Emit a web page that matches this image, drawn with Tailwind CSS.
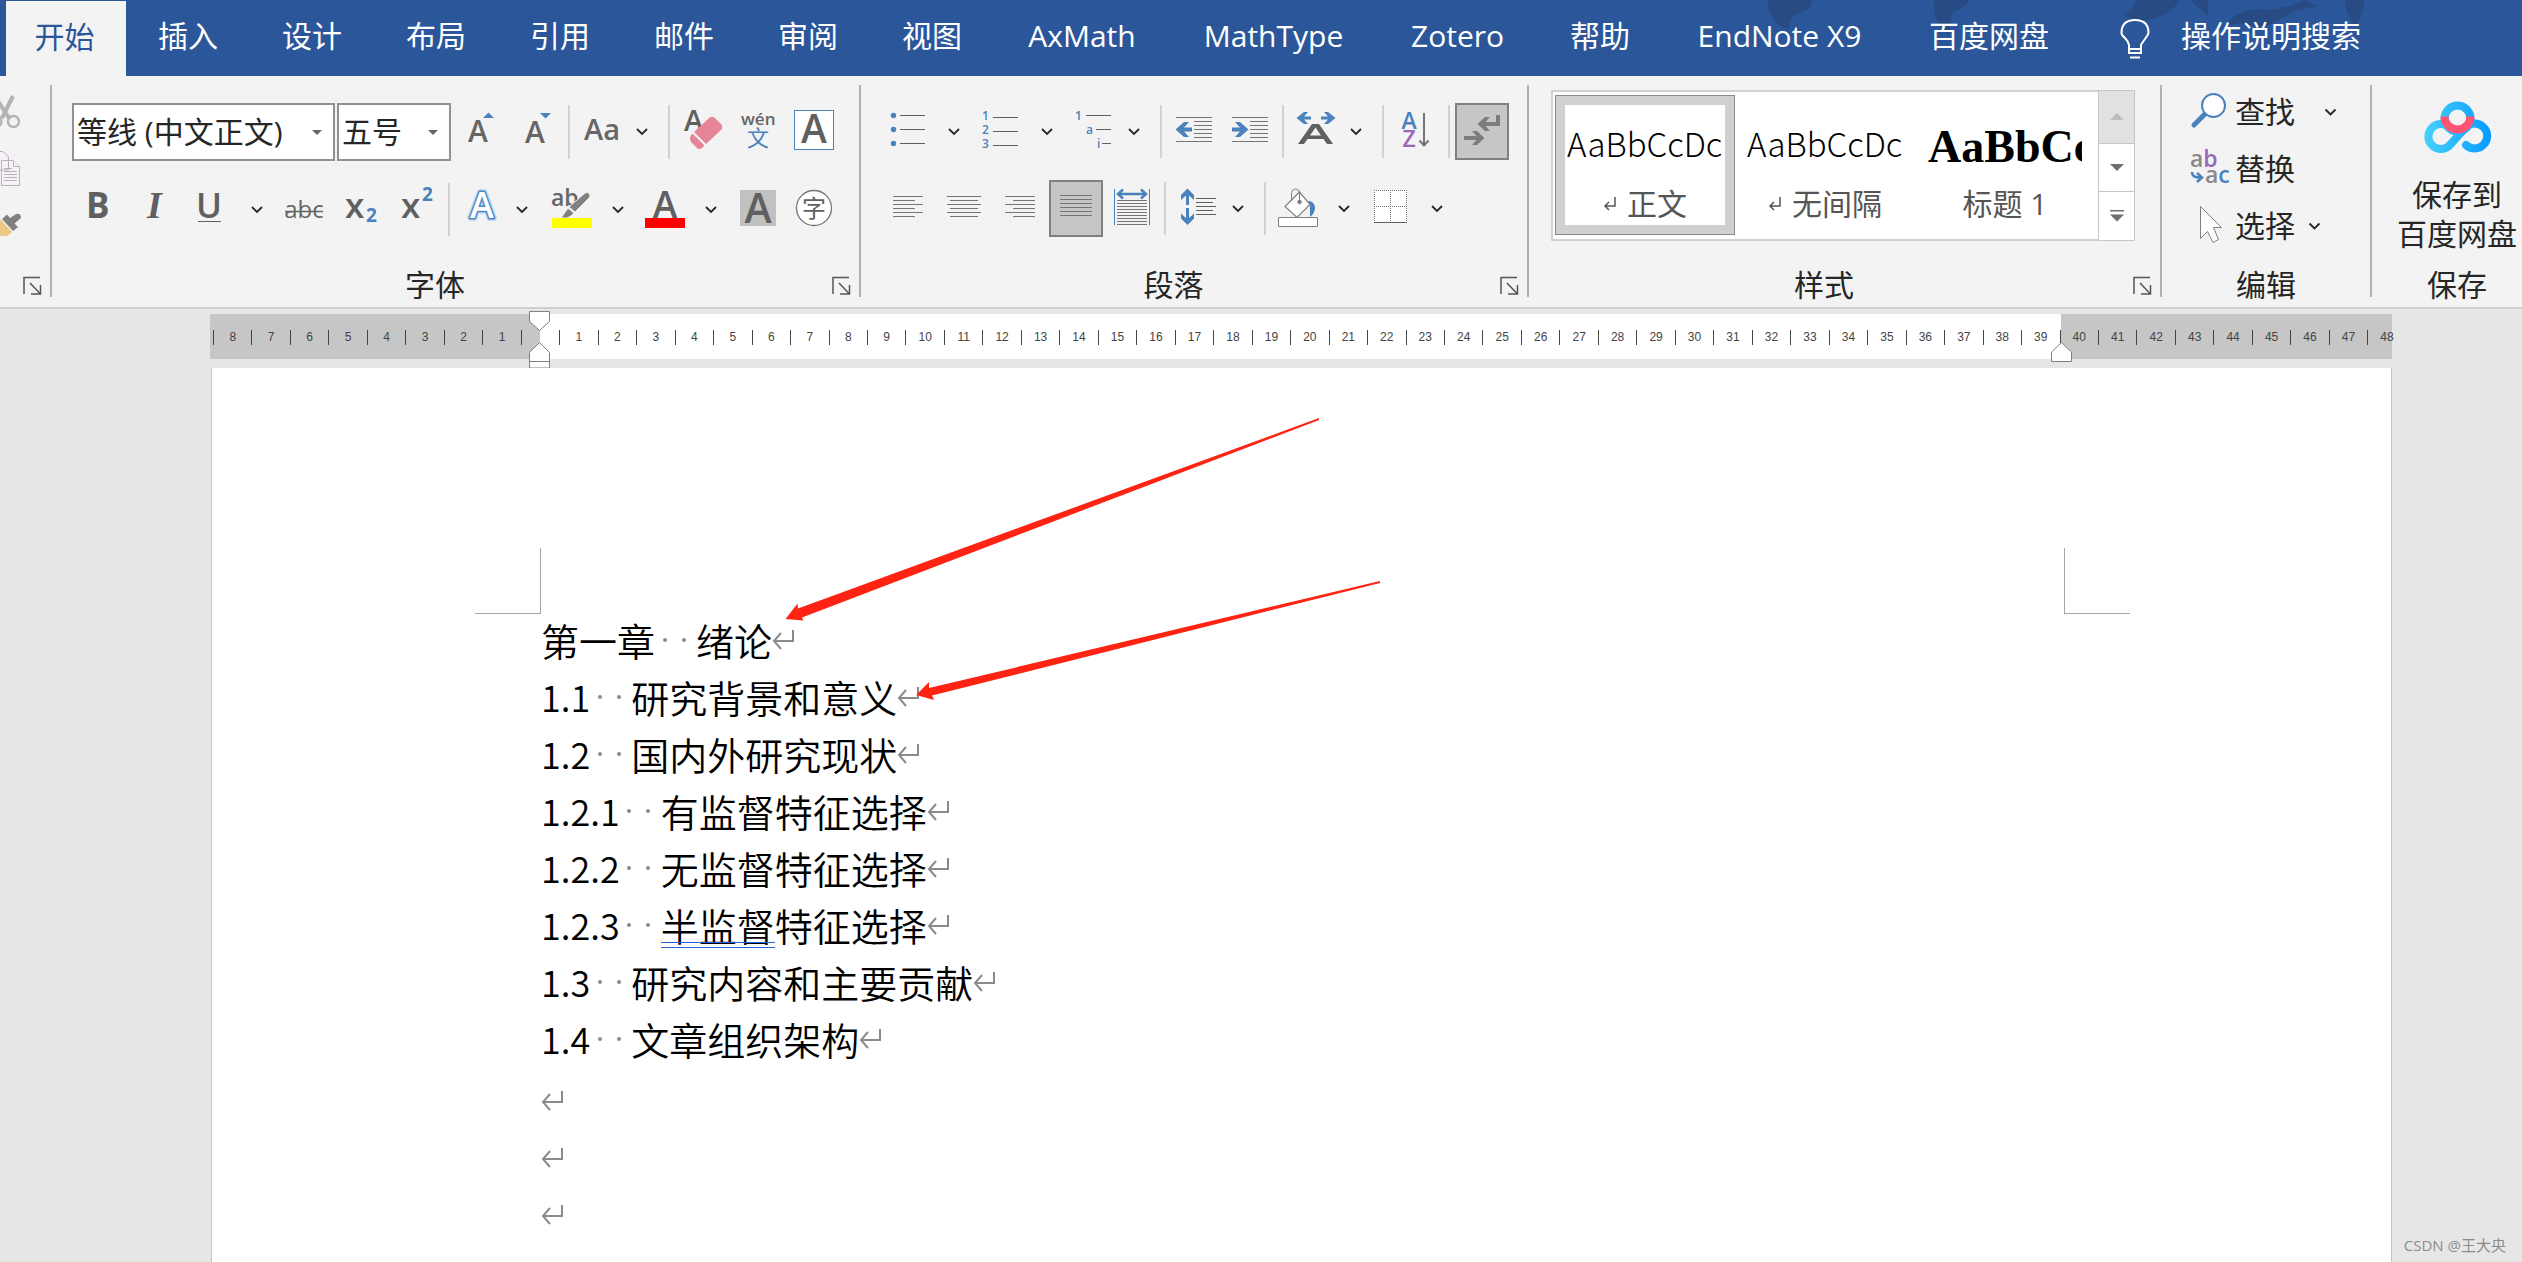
<!DOCTYPE html>
<html lang="zh-CN">
<head>
<meta charset="utf-8">
<title>Word</title>
<script src="https://cdn.jsdelivr.net/npm/@tailwindcss/browser@4"></script>
</head>
<body class="flex min-h-screen flex-col overflow-x-hidden bg-[#e6e6e6] font-['Open_Sans','Noto_Sans_CJK_SC',sans-serif] text-[#262626]">

<!-- Ribbon tabs -->
<nav class="relative flex h-[76px] shrink-0 items-stretch overflow-hidden bg-[#2b579a] pl-[6px] text-[30px] leading-[72px] text-white whitespace-nowrap">
  <svg class="absolute top-0 right-0" width="822" height="56" viewBox="1700 0 822 56" fill="#274b82">
    <path d="M1768 0H1812Q1812 10 1801 12Q1790 15 1788 30Q1768 22 1768 0ZM1934 0H1970Q1964 8 1953 12L1948 34Q1932 22 1934 0ZM2136 0H2180Q2168 18 2146 20Q2132 20 2122 14Q2134 12 2136 0ZM2190 0H2208V16ZM2224 26Q2240 6 2270 10L2290 6L2304 0L2318 6L2292 12Q2278 22 2262 28Q2240 20 2224 26ZM2345 0H2364Q2364 14 2355 26Q2346 14 2345 0Z"/>
  </svg>
  <a href="#" class="relative mt-px w-[120px] bg-[#f3f3f3] pr-[3px] text-center text-[#2b579a]">开始</a>
  <a href="#" class="relative w-[124px] text-center">插入</a>
  <a href="#" class="relative w-[124px] text-center">设计</a>
  <a href="#" class="relative w-[124px] text-center">布局</a>
  <a href="#" class="relative w-[124px] text-center">引用</a>
  <a href="#" class="relative w-[124px] text-center">邮件</a>
  <a href="#" class="relative w-[124px] text-center">审阅</a>
  <a href="#" class="relative w-[124px] text-center">视图</a>
  <a href="#" class="relative w-[176px] text-center">AxMath</a>
  <a href="#" class="relative w-[207px] text-center">MathType</a>
  <a href="#" class="relative w-[161px] text-center">Zotero</a>
  <a href="#" class="relative w-[124px] text-center">帮助</a>
  <a href="#" class="relative w-[235px] text-center">EndNote X9</a>
  <a href="#" class="relative w-[184px] text-center">百度网盘</a>
  <a href="#" class="relative ml-[32px] flex gap-[20px]">
    <svg width="48" height="76" viewBox="2114 0 48 76" fill="none" stroke="#fff" stroke-width="2"><path d="M2130 49V45Q2129 41 2126 38Q2122.500 35 2122.500 33Q2122.500 20 2136 20Q2149.500 20 2149.500 33Q2149 35 2146 39Q2143 43 2142 45V53H2130V49H2142M2131 57.500H2141"/></svg>
    <span>操作说明搜索</span>
  </a>
</nav>

<!-- Ribbon -->
<header class="flex h-[233px] shrink-0 overflow-hidden border-b-2 border-[#cfcfcf] bg-[#f3f3f3] text-[30px] leading-[40px] whitespace-nowrap">

  <!-- Clipboard -->
  <section class="flex w-[50px] shrink-0 flex-col">
    <svg width="50" height="160" viewBox="0 76 50 160">
      <g fill="none" stroke="#b3b3b3" stroke-width="2.500"><path d="M-2 101L9 118" stroke-width="4"/><path d="M13 96L2 118" stroke-width="4"/><circle cx="13.500" cy="121.500" r="5.500"/><circle cx="-4" cy="121.500" r="5.500"/></g>
      <g fill="#f6f2f7" stroke="#b9aebd"><path d="M-6 151.500H3L8.500 157V170H-6ZM1.500 160.500H13L19.500 167V185.500H1.500Z"/><path d="M13.500 160.500V166.500H19M4 168.500H12M4 171.500H17M4 174.500H17M4 177.500H17M4 180.500H17"/></g>
      <path d="M0 219L12 232L2 241L-4 236Z" fill="#ecc77f"/><path d="M2 219L7 214.500L10 218L16 214Q21 213 21 218L14.500 223.500L18 227L13 231Z" fill="#7f7f7f"/>
    </svg>
    <div class="mt-auto mb-[2px] flex h-[40px] items-center justify-end pr-[6px]">
      <button aria-label="剪贴板设置"><svg width="24" height="24" fill="none" stroke="#555" stroke-width="1.500"><path d="M4 21V4.500H20M10 10L20 20.500M20.500 12V21H11"/></svg></button>
    </div>
  </section>
  <div class="mt-[9px] h-[212px] w-[2px] shrink-0 bg-[#b1b1b1]"></div>

  <!-- Font -->
  <section class="flex w-[807px] shrink-0 flex-col pt-[27px]">
    <div class="flex h-[58px] pl-[20px]">
      <div class="relative w-[263px]">
        <select aria-label="字体" class="h-[58px] w-full appearance-none border-2 border-[#919191] bg-white pl-[3px] text-[30px]"><option>等线 (中文正文)</option></select>
        <svg class="pointer-events-none absolute top-[26px] right-[12px]" width="12" height="7"><path d="M1 1H11L6 6Z" fill="#666"/></svg>
      </div>
      <div class="relative ml-[2px] w-[114px]">
        <select aria-label="字号" class="h-[58px] w-full appearance-none border-2 border-[#919191] bg-white pl-[3px] text-[30px]"><option>五号</option></select>
        <svg class="pointer-events-none absolute top-[26px] right-[12px]" width="12" height="7"><path d="M1 1H11L6 6Z" fill="#666"/></svg>
      </div>
      <button aria-label="增大字号"><svg width="56" height="58" viewBox="451 103 56 58"><text x="468" y="142" font-size="30" font-weight="600" fill="#666">A</text><path d="M483 118L488.500 112.500L494 118Z" fill="#4a82bd"/></svg></button>
      <button aria-label="减小字号"><svg width="61" height="58" viewBox="507 103 61 58"><text x="525" y="143" font-size="30" font-weight="600" fill="#666">A</text><path d="M540 113L545.500 118.500L551 113Z" fill="#4a82bd"/></svg></button>
      <div class="mt-[2px] h-[54px] w-[2px] bg-[#d2d2d2]"></div>
      <button aria-label="更改大小写"><svg width="58" height="58" viewBox="570 103 58 58"><text x="584" y="140" font-size="29" font-weight="600" fill="#666">Aa</text></svg></button>
      <button aria-label="更改大小写选项"><svg width="40" height="58" viewBox="628 103 40 58" fill="none" stroke="#262626" stroke-width="1.800"><path d="M637 129L642 134L647 129"/></svg></button>
      <div class="mt-[2px] h-[54px] w-[2px] bg-[#d2d2d2]"></div>
      <button aria-label="清除格式"><svg width="60" height="58" viewBox="670 103 60 58"><text x="684" y="131" font-size="29" font-weight="600" fill="#606060">A</text><g fill="#e68597"><path d="M709 118Q712 115.500 715 118L721 124Q723.500 127 721 130L706 144L694 132Z"/><path d="M692.500 133.500L704.500 145.500L702 148Q699.500 150 697 148L691 142Q689 139 690.500 136Z"/></g></svg></button>
      <button aria-label="拼音指南"><svg width="54" height="58" viewBox="730 103 54 58"><text x="741" y="125" font-size="17" font-weight="600" fill="#666">wén</text><text x="747" y="146" font-size="22" fill="#4a82bd">文</text></svg></button>
      <button aria-label="字符边框"><svg width="66" height="58" viewBox="784 103 66 58"><rect x="794.500" y="110.500" width="39" height="39" fill="#fff" stroke="#4a82bd"/><text x="814" y="143" text-anchor="middle" font-size="39" font-weight="600" fill="#606060">A</text></svg></button>
    </div>
    <div class="mt-[19px] flex h-[58px] pl-[20px]">
      <button aria-label="加粗"><svg width="54" height="58" viewBox="72 180 54 58"><text x="86" y="218" font-size="35" font-weight="700" fill="#606060">B</text></svg></button>
      <button aria-label="倾斜"><svg width="54" height="58" viewBox="126 180 54 58"><text x="147" y="218" font-family="Liberation Serif,serif" font-size="38" font-style="italic" font-weight="700" fill="#606060">I</text></svg></button>
      <button aria-label="下划线"><svg width="56" height="58" viewBox="180 180 56 58"><text x="209" y="218" text-anchor="middle" font-size="35" font-weight="600" fill="#606060">U</text><path d="M198 221.500H221" stroke="#606060"/></svg></button>
      <button aria-label="下划线样式"><svg width="42" height="58" viewBox="236 180 42 58" fill="none" stroke="#262626" stroke-width="1.800"><path d="M252 207L257 212L262 207"/></svg></button>
      <button aria-label="删除线"><svg width="56" height="58" viewBox="278 180 56 58"><text x="304" y="218" text-anchor="middle" font-size="24" fill="#666">abc</text><path d="M285 211.500H323" stroke="#666" stroke-width="1.500"/></svg></button>
      <button aria-label="下标"><svg width="56" height="58" viewBox="334 180 56 58"><text x="345" y="218" font-size="35" font-weight="600" fill="#606060">x</text><text x="366" y="222" font-size="19" font-weight="700" fill="#4a82bd">2</text></svg></button>
      <button aria-label="上标"><svg width="58" height="58" viewBox="390 180 58 58"><text x="401" y="218" font-size="35" font-weight="600" fill="#606060">x</text><text x="422" y="201" font-size="19" font-weight="700" fill="#4a82bd">2</text></svg></button>
      <div class="mt-[3px] h-[53px] w-[2px] bg-[#d2d2d2]"></div>
      <button aria-label="文本效果"><svg width="56" height="58" viewBox="450 180 56 58"><g text-anchor="middle" font-size="36" font-weight="600" stroke-linejoin="round"><text x="482" y="218" fill="#c5dcf3" stroke="#c5dcf3" stroke-width="6">A</text><text x="482" y="218" fill="#4a86c8" stroke="#4a86c8" stroke-width="3">A</text><text x="482" y="218" fill="#fff">A</text></g></svg></button>
      <button aria-label="文本效果选项"><svg width="34" height="58" viewBox="506 180 34 58" fill="none" stroke="#262626" stroke-width="1.800"><path d="M517 207L522 212L527 207"/></svg></button>
      <button aria-label="突出显示"><svg width="62" height="58" viewBox="540 180 62 58"><text x="551" y="206" font-size="23" font-weight="600" fill="#666">ab</text><path d="M585 193Q590 191 590 197L575 212L569 207ZM568 208L574 213L571 216L567 218H561Z" fill="#808080" stroke="#f3f3f3"/><path d="M552 218H592V228H552Z" fill="#ff0"/></svg></button>
      <button aria-label="突出显示颜色"><svg width="32" height="58" viewBox="602 180 32 58" fill="none" stroke="#262626" stroke-width="1.800"><path d="M613 207L618 212L623 207"/></svg></button>
      <button aria-label="字体颜色"><svg width="61" height="58" viewBox="634 180 61 58"><text x="665" y="218" text-anchor="middle" font-size="37" font-weight="600" fill="#606060">A</text><path d="M645 218H685V228H645Z" fill="#f00"/></svg></button>
      <button aria-label="字体颜色选项"><svg width="35" height="58" viewBox="695 180 35 58" fill="none" stroke="#262626" stroke-width="1.800"><path d="M706 207L711 212L716 207"/></svg></button>
      <button aria-label="字符底纹"><svg width="56" height="58" viewBox="730 180 56 58"><path d="M740 190H776V226H740Z" fill="#c1c1c1"/><text x="758" y="223" text-anchor="middle" font-size="41" font-weight="600" fill="#606060">A</text></svg></button>
      <button aria-label="带圈字符"><svg width="60" height="58" viewBox="786 180 60 58"><circle cx="814" cy="208" r="17.500" fill="#fff" stroke="#757575" stroke-width="1.300"/><text x="814" y="217" text-anchor="middle" font-size="24" fill="#606060">字</text></svg></button>
    </div>
    <div class="mt-auto mb-[2px] flex h-[40px] items-center pr-[6px]">
      <span class="flex-1 pr-[11px] text-center">字体</span>
      <button aria-label="字体设置"><svg width="24" height="24" fill="none" stroke="#555" stroke-width="1.500"><path d="M4 21V4.500H20M10 10L20 20.500M20.500 12V21H11"/></svg></button>
    </div>
  </section>
  <div class="mt-[9px] h-[212px] w-[2px] shrink-0 bg-[#b1b1b1]"></div>

  <!-- Paragraph -->
  <section class="flex w-[666px] shrink-0 flex-col pt-[27px]">
    <div class="flex h-[58px] pl-[20px]">
      <button aria-label="项目符号"><svg width="56" height="58" viewBox="881 103 56 58"><g fill="#4a82bd"><circle cx="893.500" cy="115.500" r="2.700"/><circle cx="893.500" cy="129.500" r="2.700"/><circle cx="893.500" cy="143.500" r="2.700"/></g><path d="M900 115.500H925M900 129.500H925M900 143.500H925" stroke="#606060"/></svg></button>
      <button aria-label="项目符号选项"><svg width="35" height="58" viewBox="937 103 35 58" fill="none" stroke="#262626" stroke-width="1.800"><path d="M949 129L954 134L959 129"/></svg></button>
      <button aria-label="编号"><svg width="58" height="58" viewBox="972 103 58 58"><g font-size="12" font-weight="600" fill="#4a82bd"><text x="982" y="120">1</text><text x="982" y="134">2</text><text x="982" y="148">3</text></g><path d="M993 117.500H1018M993 131.500H1018M993 145.500H1018" stroke="#606060"/></svg></button>
      <button aria-label="编号选项"><svg width="35" height="58" viewBox="1030 103 35 58" fill="none" stroke="#262626" stroke-width="1.800"><path d="M1042 129L1047 134L1052 129"/></svg></button>
      <button aria-label="多级列表"><svg width="53" height="58" viewBox="1065 103 53 58"><g font-size="12" font-weight="600" fill="#4a82bd"><text x="1075" y="120">1</text><text x="1086" y="134">a</text><text x="1097" y="148">i</text></g><path d="M1086 115.500H1111M1096 129.500H1111M1102 143.500H1111" stroke="#606060"/></svg></button>
      <button aria-label="多级列表选项"><svg width="42" height="58" viewBox="1118 103 42 58" fill="none" stroke="#262626" stroke-width="1.800"><path d="M1129 129L1134 134L1139 129"/></svg></button>
      <div class="mt-[2px] h-[53px] w-[2px] bg-[#d2d2d2]"></div>
      <button aria-label="减少缩进"><svg width="60" height="58" viewBox="1162 103 60 58"><path d="M1176 117.500H1212M1194 121.500H1212M1194 125.500H1212M1194 129.500H1212M1194 133.500H1212M1194 137.500H1212M1176 141.500H1212" stroke="#757575"/><path d="M1175.500 129.500L1184 122H1189L1184 127.500H1192V131.500H1184L1189 137H1184Z" fill="#4a82bd"/></svg></button>
      <button aria-label="增加缩进"><svg width="60" height="58" viewBox="1222 103 60 58"><path d="M1232 117.500H1268M1250 121.500H1268M1250 125.500H1268M1250 129.500H1268M1250 133.500H1268M1250 137.500H1268M1232 141.500H1268" stroke="#757575"/><path d="M1248.500 129.500L1240 122H1235L1240 127.500H1232V131.500H1240L1235 137H1240Z" fill="#4a82bd"/></svg></button>
      <div class="mt-[2px] h-[53px] w-[2px] bg-[#d2d2d2]"></div>
      <button aria-label="中文版式"><svg width="58" height="58" viewBox="1284 103 58 58"><path d="M1296.500 118L1304 112H1308L1304 116.500H1311V119.500H1304L1308 124H1304ZM1335.500 118L1328 112H1324L1328 116.500H1321V119.500H1328L1324 124H1328Z" fill="#4a82bd"/><path d="M1298 144L1312 124H1319L1333 144H1327L1323.500 139H1307.500L1304 144ZM1310 135.500H1321L1315.500 127.500Z" fill="#606060" fill-rule="evenodd"/></svg></button>
      <button aria-label="中文版式选项"><svg width="40" height="58" viewBox="1342 103 40 58" fill="none" stroke="#262626" stroke-width="1.800"><path d="M1351 129L1356 134L1361 129"/></svg></button>
      <div class="mt-[2px] h-[53px] w-[2px] bg-[#d2d2d2]"></div>
      <button aria-label="排序"><svg width="64" height="58" viewBox="1384 103 64 58"><text x="1409" y="129" text-anchor="middle" font-size="23" font-weight="600" fill="#4a82bd">A</text><text x="1409" y="147" text-anchor="middle" font-size="23" font-weight="600" fill="#9b67b8">Z</text><path d="M1424 113V145M1419.500 140.500L1424 145.500L1428.500 140.500" fill="none" stroke="#757575" stroke-width="2"/></svg></button>
      <div class="mt-[2px] h-[53px] w-[2px] bg-[#d2d2d2]"></div>
      <button aria-label="显示编辑标记" class="ml-[5px] h-[57px] w-[54px] border-2 border-[#808080] bg-[#c6c6c6]"><svg width="50" height="53" viewBox="1457 105 50 53" fill="#7c7c7c"><path d="M1477.500 124L1485 117H1490L1485.500 122H1496V115H1500V126H1485.500L1490 131H1485ZM1484.500 138L1477 131H1472L1476.500 136H1464V140H1476.500L1472 145H1477Z"/></svg></button>
    </div>
    <div class="mt-[19px] flex h-[58px] pl-[20px]">
      <button aria-label="左对齐"><svg width="54" height="58" viewBox="881 180 54 58"><path d="M893 196.500H923M893 200.500H915M893 204.500H923M893 208.500H915M893 212.500H923M893 216.500H915" stroke="#757575"/></svg></button>
      <button aria-label="居中"><svg width="58" height="58" viewBox="935 180 58 58"><path d="M947 196.500H981M950 200.500H978M947 204.500H981M950 208.500H978M947 212.500H981M950 216.500H978" stroke="#757575"/></svg></button>
      <button aria-label="右对齐"><svg width="56" height="58" viewBox="993 180 56 58"><path d="M1005 196.500H1035M1013 200.500H1035M1005 204.500H1035M1013 208.500H1035M1005 212.500H1035M1013 216.500H1035" stroke="#757575"/></svg></button>
      <button aria-label="两端对齐" class="h-[57px] w-[54px] border-2 border-[#808080] bg-[#c6c6c6]"><svg width="50" height="53" viewBox="1051 182 50 53"><path d="M1060 195.500H1092M1060 199.500H1092M1060 203.500H1092M1060 207.500H1092M1060 211.500H1092M1060 215.500H1092" stroke="#757575"/></svg></button>
      <button aria-label="分散对齐"><svg width="61" height="58" viewBox="1103 180 61 58"><path d="M1114.500 189V225M1149.500 189V225" stroke="#4a82bd"/><path d="M1117 194H1147M1123 189.500L1118 194L1123 198.500M1141 189.500L1146 194L1141 198.500" fill="none" stroke="#4a82bd" stroke-width="2.500"/><path d="M1117 200.500H1147M1117 203.500H1147M1117 206.500H1147M1117 209.500H1147M1117 212.500H1147M1117 215.500H1147M1117 218.500H1147M1117 221.500H1147M1117 224.500H1147" stroke="#757575"/></svg></button>
      <div class="mt-[2px] h-[53px] w-[2px] bg-[#d2d2d2]"></div>
      <button aria-label="行距"><svg width="60" height="58" viewBox="1166 180 60 58"><path d="M1187.500 188.500L1194 195V200L1189 195.500V205H1186V195.500L1181 200V195ZM1187.500 225L1194 218.500V213.500L1189 218V208H1186V218L1181 213.500V218.500Z" fill="#4a82bd"/><path d="M1196 198.500H1216M1196 202.500H1213M1196 206.500H1216M1196 210.500H1213M1196 214.500H1216" stroke="#606060"/></svg></button>
      <button aria-label="行距选项"><svg width="38" height="58" viewBox="1226 180 38 58" fill="none" stroke="#262626" stroke-width="1.800"><path d="M1233 206L1238 211L1243 206"/></svg></button>
      <div class="mt-[2px] h-[53px] w-[2px] bg-[#d2d2d2]"></div>
      <button aria-label="底纹"><svg width="64" height="58" viewBox="1266 180 64 58"><path d="M1308 201Q1315 201 1315 209Q1314 214 1310 217V207Z" fill="#4a82bd"/><g fill="#fff" stroke="#808080"><path d="M1299.500 192L1310 204.500L1297 217.500L1285 206.500Z" stroke-width="1.200"/><path d="M1291.500 201V193Q1292 189 1295.500 189Q1299.500 189 1299.500 193V201" fill="none"/><circle cx="1299.500" cy="202" r="1.800" fill="#808080"/><path d="M1278.500 217.500H1317.500V226.500H1278.500Z"/></g></svg></button>
      <button aria-label="底纹选项"><svg width="32" height="58" viewBox="1330 180 32 58" fill="none" stroke="#262626" stroke-width="1.800"><path d="M1339 206L1344 211L1349 206"/></svg></button>
      <button aria-label="边框"><svg width="58" height="58" viewBox="1362 180 58 58"><path d="M1374 190H1407V223H1374Z" fill="#fff"/><path d="M1374 190.500H1407M1374 206.500H1407M1374.500 190V222M1390.500 190V222M1406.500 190V222" stroke="#757575" stroke-dasharray="1 1"/><path d="M1374 222.500H1407" stroke="#606060"/></svg></button>
      <button aria-label="边框选项"><svg width="36" height="58" viewBox="1420 180 36 58" fill="none" stroke="#262626" stroke-width="1.800"><path d="M1432 206L1437 211L1442 206"/></svg></button>
    </div>
    <div class="mt-auto mb-[2px] flex h-[40px] items-center pr-[6px]">
      <span class="flex-1 pr-[11px] text-center">段落</span>
      <button aria-label="段落设置"><svg width="24" height="24" fill="none" stroke="#555" stroke-width="1.500"><path d="M4 21V4.500H20M10 10L20 20.500M20.500 12V21H11"/></svg></button>
    </div>
  </section>
  <div class="mt-[9px] h-[212px] w-[2px] shrink-0 bg-[#b1b1b1]"></div>

  <!-- Styles -->
  <section class="flex w-[631px] shrink-0 flex-col pt-[14px]">
    <div class="ml-[22px] flex h-[151px] w-[584px]">
      <div class="flex flex-1 border-2 border-r-0 border-[#d2d2d2] bg-white p-[3px] pl-[2px]">
        <button class="flex h-[140px] w-[180px] flex-col items-center overflow-hidden border border-[#8a8a8a] bg-[#d1d0ce] p-[9px]">
          <span class="flex h-[120px] w-full flex-col items-center bg-white pt-[18px]">
            <span class="w-[156px] overflow-hidden text-left font-['Noto_Sans_CJK_SC',sans-serif] text-[33px] font-light text-black">AaBbCcDc</span>
            <span class="mt-[21px] flex items-center gap-[11px] text-[#555]"><svg width="13" height="16" fill="none" stroke="#555" stroke-width="1.500"><path d="M12 1V10H2M6 6L2 10L6 14"/></svg>正文</span>
          </span>
        </button>
        <button class="flex h-[140px] w-[180px] flex-col items-center overflow-hidden pt-[28px]">
          <span class="w-[156px] overflow-hidden text-left font-['Noto_Sans_CJK_SC',sans-serif] text-[33px] font-light text-black">AaBbCcDc</span>
          <span class="mt-[21px] flex items-center gap-[11px] text-[#555]"><svg width="13" height="16" fill="none" stroke="#555" stroke-width="1.500"><path d="M12 1V10H2M6 6L2 10L6 14"/></svg>无间隔</span>
        </button>
        <button class="flex h-[140px] w-[180px] flex-col items-center overflow-hidden pt-[28px]">
          <span class="w-[154px] overflow-hidden text-left font-['Liberation_Serif',serif] text-[46px] leading-[48px] font-bold text-black">AaBbCc</span>
          <span class="mt-[13px] text-[#555]">标题 1</span>
        </button>
      </div>
      <div class="flex w-[38px] flex-col">
        <button aria-label="上一行" class="flex h-[54px] items-center justify-center border border-[#c6c6c6] bg-[#e1e1e1]"><svg width="14" height="8"><path d="M0 7H14L7 0Z" fill="#bdbdbd"/></svg></button>
        <button aria-label="下一行" class="flex h-[48px] items-center justify-center border border-t-0 border-[#c6c6c6] bg-white"><svg width="14" height="8"><path d="M0 0H14L7 7Z" fill="#707070"/></svg></button>
        <button aria-label="其他样式" class="flex h-[49px] items-center justify-center border border-t-0 border-[#c6c6c6] bg-white"><svg width="14" height="12"><path d="M0 0H14V1.500H0ZM0 4.500H14L7 11.500Z" fill="#707070"/></svg></button>
      </div>
    </div>
    <div class="mt-auto mb-[2px] flex h-[40px] items-center pr-[6px]">
      <span class="flex-1 pr-[11px] text-center">样式</span>
      <button aria-label="样式设置"><svg width="24" height="24" fill="none" stroke="#555" stroke-width="1.500"><path d="M4 21V4.500H20M10 10L20 20.500M20.500 12V21H11"/></svg></button>
    </div>
  </section>
  <div class="mt-[9px] h-[212px] w-[2px] shrink-0 bg-[#b1b1b1]"></div>

  <!-- Editing -->
  <section class="flex w-[208px] shrink-0 flex-col pt-[8px]">
    <button class="flex h-[56px] items-center"><svg width="73" height="56" viewBox="2162 84 73 56"><path d="M2206 113L2194 125" stroke="#4a82bd" stroke-width="5" stroke-linecap="round"/><circle cx="2213.500" cy="105.500" r="11.500" fill="#fff" stroke="#4a82bd" stroke-width="2"/></svg>查找<svg class="ml-[29px]" width="14" height="8" fill="none" stroke="#262626" stroke-width="1.800"><path d="M1.500 1.500L6.500 6.500L11.500 1.500"/></svg></button>
    <button class="flex h-[57px] items-center"><svg width="73" height="57" viewBox="2162 140 73 57"><g font-size="23" font-weight="600"><text x="2190" y="167" fill="#8a8a8a">a<tspan fill="#9b67b8">b</tspan></text><text x="2205" y="183" fill="#8a8a8a">a<tspan fill="#4a82bd">c</tspan></text></g><path d="M2192 172Q2192 178 2201 177.500M2197 173L2202 177.500L2197 182" fill="none" stroke="#4a82bd" stroke-width="2.500"/></svg>替换</button>
    <button class="flex h-[57px] items-center"><svg width="73" height="57" viewBox="2162 197 73 57"><path d="M2200.500 206.500V238.500L2207.500 231.500L2213 242.500L2218.500 239.500L2213.500 227.500H2221.500Z" fill="#fff" stroke="#808080"/></svg>选择<svg class="ml-[13px]" width="14" height="8" fill="none" stroke="#262626" stroke-width="1.800"><path d="M1.500 1.500L6.500 6.500L11.500 1.500"/></svg></button>
    <div class="mt-auto mb-[2px] h-[40px] text-center">编辑</div>
  </section>
  <div class="mt-[9px] h-[212px] w-[2px] shrink-0 bg-[#b1b1b1]"></div>

  <!-- Save -->
  <section class="flex w-[170px] shrink-0 flex-col items-center pt-[22px]">
    <button class="flex flex-col items-center">
      <svg width="72" height="60" viewBox="2422 98 72 60" fill="none" stroke-width="8">
        <defs><linearGradient id="disk" x1="2425" y1="0" x2="2491" y2="0" gradientUnits="userSpaceOnUse"><stop offset="0" stop-color="#45d2fb"/><stop offset="1" stop-color="#0a9bff"/></linearGradient></defs>
        <path d="M2467 145A12.500 12.500 0 1 0 2467 127L2450 146A12.500 12.500 0 1 1 2450 127" stroke="url(#disk)" stroke-linecap="round"/>
        <circle cx="2458.500" cy="118.500" r="13" stroke="url(#disk)"/>
        <path d="M2445.500 116.500A13 13 0 1 0 2471.500 116.500" stroke="#ff5573"/>
      </svg>
      <span class="mt-[17px] text-center leading-[39px]">保存到<br>百度网盘</span>
    </button>
    <div class="mt-auto mb-[2px] h-[40px]">保存</div>
  </section>
</header>

<!-- Document workspace -->
<main class="relative flex flex-1 flex-col overflow-hidden pt-[5px] pr-[130px] pl-[210px]">
  <!-- Ruler -->
  <div class="relative flex h-[45px] bg-[#c6c6c6]">
    <div class="ml-[330px] mr-[331px] h-full flex-1 bg-white"></div>
    <div id="ruler" class="absolute inset-y-0 right-[-14px] left-[3px] flex items-center pt-px font-['Liberation_Sans',sans-serif] text-[12px] leading-[15px] text-[#444]"></div>
    <svg class="absolute top-[-3px] left-[319px]" width="21" height="58" viewBox="0 0 21 58" fill="#fff" stroke="#808080"><path d="M.5 .5H20.500V10.500L10.500 19.500L.5 10.500ZM.5 57V41.500L10.500 31.500L20.500 41.500V57ZM.5 50.500H20.500"/></svg>
    <svg class="absolute top-[28px] right-[320px]" width="21" height="20" viewBox="0 0 21 20" fill="#fff" stroke="#808080"><path d="M.5 19.500V10L10.500 .5L20.500 10V19.500Z"/></svg>
  </div>

  <!-- Page -->
  <article class="relative mt-[9px] ml-px flex-1 border-x border-[#c6c6c6] bg-white pt-[243px] pl-[329px] font-['Noto_Sans_CJK_SC',sans-serif] text-[38px] leading-[57px] font-[350] whitespace-nowrap text-black">
    <div class="absolute top-[180px] left-[263px] size-[66px] border-r border-b border-[#a5a5a5]"></div>
    <div class="absolute top-[180px] right-[261px] size-[66px] border-b border-l border-[#a5a5a5]"></div>
    <div id="lines"></div>
  </article>

  <svg class="pointer-events-none absolute top-0 left-0" width="1400" height="420" viewBox="0 309 1400 420" fill="#ff2314">
    <path d="M1319 418L798 608.500L797.500 603.500L785.500 619L803.500 620.500L802 617.500L1319 420Z"/>
    <path d="M1380 581L929 688L929 682L916 695L934 700L932 695.500L1380 583Z"/>
  </svg>
  <div class="absolute right-[16px] bottom-[6px] text-[15px] leading-[22px] text-[#8c8c8c]">CSDN @王大央</div>
</main>

<script>
  // Ruler: one cell per character position, centred on its number
  let cells = '';
  for (let n = -8; n <= 48; n++) {
    cells += '<span class="h-[15px] flex-1 border-l border-[#444] text-center">' + (n ? Math.abs(n) : '') + '</span>';
  }
  document.getElementById('ruler').innerHTML = cells;

  // Document paragraphs: number, heading, checked phrase
  const mark = '<svg width="23" height="22" fill="none" stroke="#8a8a8a" stroke-width="2"><path d="M21 1V12H2M9 4L2 12L9 20"/></svg>';
  const dot = '<span class="flex w-[19px] justify-center"><span class="size-[4px] rounded-full bg-[#8a8a8a]"></span></span>';
  const rows = [
    ['', '第一章', '绪论'],
    ['1.1', '', '研究背景和意义'],
    ['1.2', '', '国内外研究现状'],
    ['1.2.1', '', '有监督特征选择'],
    ['1.2.2', '', '无监督特征选择'],
    ['1.2.3', '', '<span class="relative">半监督<span class="absolute bottom-[4px] left-0 h-[6px] w-full border-y border-[#2563d9]"></span></span>特征选择'],
    ['1.3', '', '研究内容和主要贡献'],
    ['1.4', '', '文章组织架构']
  ];
  let html = '';
  for (const [num, chapter, title] of rows) {
    html += '<p class="flex h-[57px] items-center">' +
      (num ? '<span class="text-[36px]">' + num + '</span>' : '<span>' + chapter + '</span>') +
      dot + dot + '<span class="pl-[3px]">' + title + '</span>' + mark + '</p>';
  }
  html += '<div class="pt-[5px]">' + ('<p class="flex h-[57px] items-center">' + mark + '</p>').repeat(3) + '</div>';
  document.getElementById('lines').innerHTML = html;
</script>
</body>
</html>
